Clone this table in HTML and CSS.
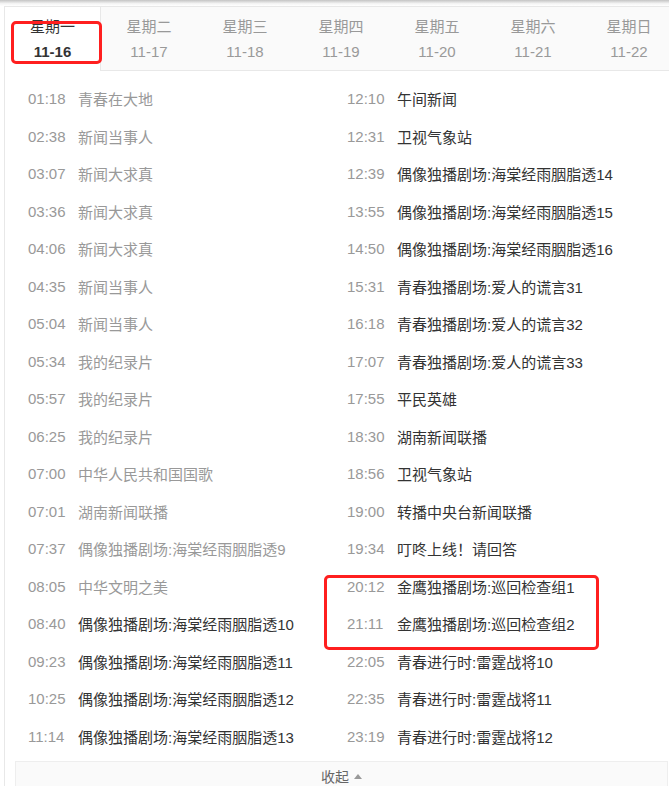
FILE: index.html
```html
<!DOCTYPE html>
<html lang="zh-CN">
<head>
<meta charset="UTF-8">
<title>节目单</title>
<link rel="stylesheet" href="styles.css">
</head>
<body>
<div class="topshade"></div>
<div class="page">
  <div class="schedule">
    <ul class="days">
      <li class="day active"><span class="wd">星期一</span><span class="dt">11-16</span></li>
      <li class="day"><span class="wd">星期二</span><span class="dt">11-17</span></li>
      <li class="day"><span class="wd">星期三</span><span class="dt">11-18</span></li>
      <li class="day"><span class="wd">星期四</span><span class="dt">11-19</span></li>
      <li class="day"><span class="wd">星期五</span><span class="dt">11-20</span></li>
      <li class="day"><span class="wd">星期六</span><span class="dt">11-21</span></li>
      <li class="day"><span class="wd">星期日</span><span class="dt">11-22</span></li>
    </ul>

    <div class="programs">
      <ul class="col">
        <li class="past"><span class="time">01:18</span><span class="name">青春在大地</span></li>
        <li class="past"><span class="time">02:38</span><span class="name">新闻当事人</span></li>
        <li class="past"><span class="time">03:07</span><span class="name">新闻大求真</span></li>
        <li class="past"><span class="time">03:36</span><span class="name">新闻大求真</span></li>
        <li class="past"><span class="time">04:06</span><span class="name">新闻大求真</span></li>
        <li class="past"><span class="time">04:35</span><span class="name">新闻当事人</span></li>
        <li class="past"><span class="time">05:04</span><span class="name">新闻当事人</span></li>
        <li class="past"><span class="time">05:34</span><span class="name">我的纪录片</span></li>
        <li class="past"><span class="time">05:57</span><span class="name">我的纪录片</span></li>
        <li class="past"><span class="time">06:25</span><span class="name">我的纪录片</span></li>
        <li class="past"><span class="time">07:00</span><span class="name">中华人民共和国国歌</span></li>
        <li class="past"><span class="time">07:01</span><span class="name">湖南新闻联播</span></li>
        <li class="past"><span class="time">07:37</span><span class="name">偶像独播剧场:海棠经雨胭脂透9</span></li>
        <li class="past"><span class="time">08:05</span><span class="name">中华文明之美</span></li>
        <li><span class="time">08:40</span><span class="name">偶像独播剧场:海棠经雨胭脂透10</span></li>
        <li><span class="time">09:23</span><span class="name">偶像独播剧场:海棠经雨胭脂透11</span></li>
        <li><span class="time">10:25</span><span class="name">偶像独播剧场:海棠经雨胭脂透12</span></li>
        <li><span class="time">11:14</span><span class="name">偶像独播剧场:海棠经雨胭脂透13</span></li>
      </ul>
      <ul class="col">
        <li><span class="time">12:10</span><span class="name">午间新闻</span></li>
        <li><span class="time">12:31</span><span class="name">卫视气象站</span></li>
        <li><span class="time">12:39</span><span class="name">偶像独播剧场:海棠经雨胭脂透14</span></li>
        <li><span class="time">13:55</span><span class="name">偶像独播剧场:海棠经雨胭脂透15</span></li>
        <li><span class="time">14:50</span><span class="name">偶像独播剧场:海棠经雨胭脂透16</span></li>
        <li><span class="time">15:31</span><span class="name">青春独播剧场:爱人的谎言31</span></li>
        <li><span class="time">16:18</span><span class="name">青春独播剧场:爱人的谎言32</span></li>
        <li><span class="time">17:07</span><span class="name">青春独播剧场:爱人的谎言33</span></li>
        <li><span class="time">17:55</span><span class="name">平民英雄</span></li>
        <li><span class="time">18:30</span><span class="name">湖南新闻联播</span></li>
        <li><span class="time">18:56</span><span class="name">卫视气象站</span></li>
        <li><span class="time">19:00</span><span class="name">转播中央台新闻联播</span></li>
        <li><span class="time">19:34</span><span class="name">叮咚上线！请回答</span></li>
        <li><span class="time">20:12</span><span class="name">金鹰独播剧场:巡回检查组1</span></li>
        <li><span class="time">21:11</span><span class="name">金鹰独播剧场:巡回检查组2</span></li>
        <li><span class="time">22:05</span><span class="name">青春进行时:雷霆战将10</span></li>
        <li><span class="time">22:35</span><span class="name">青春进行时:雷霆战将11</span></li>
        <li><span class="time">23:19</span><span class="name">青春进行时:雷霆战将12</span></li>
      </ul>
    </div>

    <div class="fold">收起<span class="arrow"></span></div>
  </div>

  <!-- red marks drawn over the screenshot -->
  <div class="mark mark-day"></div>
  <div class="mark mark-rows"></div>
</div>
</body>
</html>
```

FILE: styles.css
```css
html, body {
  margin: 0;
  padding: 0;
  background: #fff;
}

body {
  font-family: "Liberation Sans", "Noto Sans CJK SC", sans-serif;
  font-size: 15px;
  color: #333;
  overflow: hidden;
}

ul {
  list-style: none;
  margin: 0;
  padding: 0;
}

.topshade {
  height: 6px;
  background: linear-gradient(#c4c4c4, #f4f4f4 60%, #fff);
}

.page {
  position: relative;
}

.schedule {
  margin-left: 4px;
  width: 673px;
  border: 1px solid #e8e8e8;
  border-bottom: none;
}

/* day tabs */
.days {
  display: flex;
  background: #fafafa;
  border-bottom: 1px solid #e8e8e8;
}

.day {
  flex: 0 0 96px;
  height: 63px;
  display: flex;
  flex-direction: column;
  align-items: center;
  justify-content: center;
  line-height: 25px;
  color: #999;
}

.day.active {
  background: #fff;
  color: #333;
  border-right: 1px solid #e8e8e8;
  margin-bottom: -1px;
  height: 64px;
  padding-bottom: 1px;
  box-sizing: border-box;
}

.day.active .dt {
  font-weight: bold;
}

/* program list */
.programs {
  display: grid;
  grid-template-columns: 319px 1fr;
  padding: 9px 0 0 23px;
}

.col li {
  display: flex;
  height: 37.5px;
  align-items: center;
  white-space: nowrap;
}

.time {
  width: 50px;
  flex: none;
  color: #999;
}

.name {
  color: #333;
}

.past .name {
  color: #999;
}

/* fold bar */
.fold {
  margin: 6px 10px 0 10px;
  height: 30px;
  line-height: 30px;
  background: #fafafa;
  border: 1px solid #eee;
  border-bottom: none;
  text-align: center;
  font-size: 14px;
  color: #666;
}

.fold .arrow {
  display: inline-block;
  margin-left: 5px;
  width: 0;
  height: 0;
  border-left: 4px solid transparent;
  border-right: 4px solid transparent;
  border-bottom: 5px solid #999;
  vertical-align: 3px;
}

/* annotations */
.mark {
  position: absolute;
  border: 3px solid #ff1f1f;
  border-radius: 5px;
  box-sizing: border-box;
}

.mark-day {
  left: 11px;
  top: 15px;
  width: 91px;
  height: 43px;
}

.mark-rows {
  left: 324px;
  top: 569px;
  width: 275px;
  height: 75px;
}
```
